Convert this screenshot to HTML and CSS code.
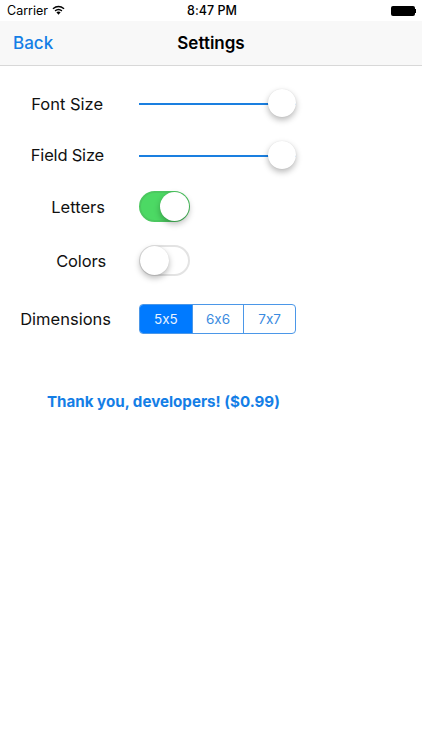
FILE: index.html
```html
<!DOCTYPE html>
<html lang="en">
<head>
<meta charset="utf-8">
<title>Settings</title>
<link rel="stylesheet" href="styles.css">
</head>
<body>
<div class="screen">
  <header class="top">
    <div class="status">
      <div class="status-left">
        <span>Carrier</span>
        <svg class="wifi" viewBox="0 0 14 10" width="13" height="10"><path d="M7 10 L4.7 7.4 Q7 5.6 9.3 7.4 Z" fill="#000"/><path d="M3.3 5.9 Q7 2.9 10.7 5.9" fill="none" stroke="#000" stroke-width="1.5"/><path d="M1 3.6 Q7 -1.3 13 3.6" fill="none" stroke="#000" stroke-width="1.5"/></svg>
      </div>
      <div class="status-time">8:47 PM</div>
      <div class="status-right">
        <span class="battery"></span><span class="battery-tip"></span>
      </div>
    </div>
    <nav class="nav">
      <a class="back">Back</a>
      <div class="title">Settings</div>
    </nav>
  </header>
  <main class="form">
    <div class="row row-font">
      <label class="label">Font Size</label>
      <div class="slider"><span class="track"></span><span class="thumb"></span></div>
    </div>
    <div class="row row-field">
      <label class="label">Field Size</label>
      <div class="slider"><span class="track"></span><span class="thumb"></span></div>
    </div>
    <div class="row row-letters">
      <label class="label">Letters</label>
      <div class="switch on"><span class="knob"></span></div>
    </div>
    <div class="row row-colors">
      <label class="label">Colors</label>
      <div class="switch"><span class="knob"></span></div>
    </div>
    <div class="row row-dim">
      <label class="label">Dimensions</label>
      <div class="segments">
        <span class="seg active">5x5</span>
        <span class="seg">6x6</span>
        <span class="seg">7x7</span>
      </div>
    </div>
    <div class="thanks">Thank you, developers! ($0.99)</div>
  </main>
</div>
</body>
</html>
```
FILE: styles.css
```css
* { box-sizing: border-box; }
html, body { margin: 0; padding: 0; background: #fff; }
body { font-family: "Inter", "Liberation Sans", sans-serif; color: #000; font-feature-settings: "calt" 0; }
.screen { width: 422px; height: 750px; overflow: hidden; background: #fff; }
.top { background: #f8f8f8; border-bottom: 1px solid #d8d8d8; height: 66px; }
.status { height: 21px; background: #fff; display: grid; grid-template-columns: 1fr auto 1fr; align-items: center; padding: 0 6px 0 7px; font-size: 12.5px; }
.status-left { display: flex; align-items: center; gap: 4px; }
.wifi { margin-top: -2px; }
.status-time { font-weight: 500; font-size: 12.5px; margin-left: 1px; }
.status-right { display: flex; justify-content: flex-end; align-items: center; }
.battery { width: 24px; height: 10px; background: #000; border-radius: 2px; }
.battery-tip { width: 1.5px; height: 4px; background: #000; }
.nav { height: 44px; display: grid; grid-template-columns: 1fr auto 1fr; align-items: center; padding: 0 13px; }
.back { color: #147ee6; font-size: 17px; font-weight: 500; grid-column: 1; grid-row: 1; }
.title { grid-column: 2; grid-row: 1; font-size: 17px; font-weight: 600; }
.form { display: block; }
.row { display: grid; grid-template-columns: 104px 157px; column-gap: 35px; align-items: center; }
.label { font-size: 16.5px; text-align: right; color: #111; white-space: nowrap; }
.row-font { margin-top: 20px; height: 36px; }
.row-font .label { margin-right: 1px; }
.row-field { margin-top: 16px; height: 36px; }
.row-field .label { letter-spacing: -.2px; margin-bottom: 2px; }
.row-letters { margin-top: 17px; height: 31px; }
.row-letters .label { margin-right: -1px; }
.row-colors { margin-top: 23px; height: 31px; }
.row-colors .label { margin-right: -2px; letter-spacing: -.15px; }
.row-dim { margin-top: 28px; height: 30px; }
.row-dim .label { margin-right: -7px; }
.slider { display: flex; align-items: center; position: relative; height: 28px; }
.track { display: block; width: 100%; height: 2.5px; background: #1a7fe0; }
.thumb { position: absolute; right: 0; top: -1px; width: 28px; height: 28px; border-radius: 50%; background: #fff; box-shadow: 0 3px 6px rgba(0,0,0,.28), 0 0 1px rgba(0,0,0,.12); }
.switch { position: relative; width: 51px; height: 31px; border-radius: 16px; background: #fff; border: 2px solid #e3e3e3; }
.switch.on { background: #4cd964; border-color: #4cc860; }
.knob { position: absolute; top: -1.5px; left: -1.5px; width: 29px; height: 29px; border-radius: 50%; background: #fff; box-shadow: 0 3px 6px rgba(0,0,0,.28), 0 0 1px rgba(0,0,0,.14); }
.switch.on .knob { left: auto; right: -1px; top: -1px; }
.segments { display: grid; grid-template-columns: repeat(3, 1fr); height: 30px; border: 1.5px solid #4b97e8; border-radius: 4px; overflow: hidden; }
.seg { display: flex; align-items: center; justify-content: center; font-size: 13.5px; color: #3a8be0; border-left: 1.5px solid #4b97e8; }
.seg:first-child { border-left: 0; }
.seg.active { background: #007aff; color: #e8f2ff; }
.thanks { margin-top: 58px; margin-left: 47px; font-size: 15.15px; font-weight: 700; color: #147ee6; white-space: nowrap; }
```
